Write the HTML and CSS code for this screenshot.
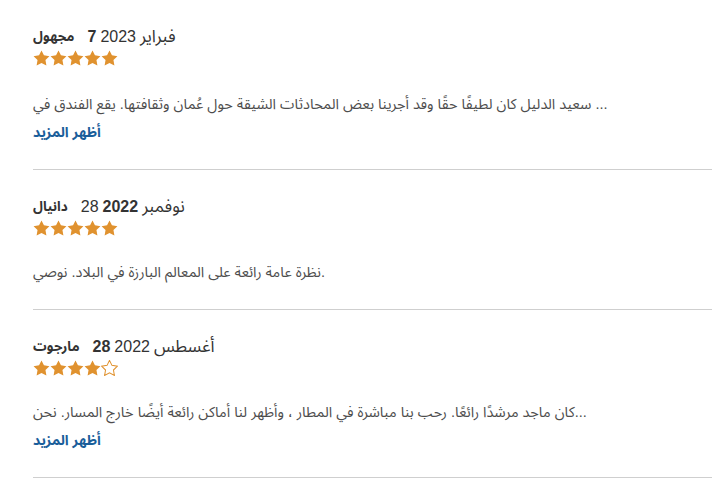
FILE: index.html
```html
<!DOCTYPE html>
<html lang="ar">
<head>
<meta charset="utf-8">
<link rel="stylesheet" href="styles.css">
</head>
<body>
<svg width="0" height="0" class="defs">
  <defs>
    <polygon id="star" points="12,2 15.09,8.26 22,9.27 17,14.14 18.18,21.02 12,17.77 5.82,21.02 7,14.14 2,9.27 8.91,8.26"/>
  </defs>
</svg>
<div class="reviews">
  <div class="review">
    <div class="head">
      <span class="name">مجهول</span>
      <span class="b">7</span>
      <span>2023</span>
      <span class="month">فبراير</span>
    </div>
    <div class="stars">
      <svg class="star" viewBox="1.5 1.5 21 20.2"><use href="#star"/></svg>
      <svg class="star" viewBox="1.5 1.5 21 20.2"><use href="#star"/></svg>
      <svg class="star" viewBox="1.5 1.5 21 20.2"><use href="#star"/></svg>
      <svg class="star" viewBox="1.5 1.5 21 20.2"><use href="#star"/></svg>
      <svg class="star" viewBox="1.5 1.5 21 20.2"><use href="#star"/></svg>
    </div>
    <p class="text">سعيد الدليل كان لطيفًا حقًا وقد أجرينا بعض المحادثات الشيقة حول عُمان وثقافتها. يقع الفندق في ...</p>
    <a class="more" href="#">أظهر المزيد</a>
  </div>
  <div class="review">
    <div class="head">
      <span class="name">دانيال</span>
      <span>28</span>
      <span class="b">2022</span>
      <span class="month">نوفمبر</span>
    </div>
    <div class="stars">
      <svg class="star" viewBox="1.5 1.5 21 20.2"><use href="#star"/></svg>
      <svg class="star" viewBox="1.5 1.5 21 20.2"><use href="#star"/></svg>
      <svg class="star" viewBox="1.5 1.5 21 20.2"><use href="#star"/></svg>
      <svg class="star" viewBox="1.5 1.5 21 20.2"><use href="#star"/></svg>
      <svg class="star" viewBox="1.5 1.5 21 20.2"><use href="#star"/></svg>
    </div>
    <p class="text">نظرة عامة رائعة على المعالم البارزة في البلاد. نوصي.</p>
  </div>
  <div class="review">
    <div class="head">
      <span class="name">مارجوت</span>
      <span class="b">28</span>
      <span>2022</span>
      <span class="month">أغسطس</span>
    </div>
    <div class="stars">
      <svg class="star" viewBox="1.5 1.5 21 20.2"><use href="#star"/></svg>
      <svg class="star" viewBox="1.5 1.5 21 20.2"><use href="#star"/></svg>
      <svg class="star" viewBox="1.5 1.5 21 20.2"><use href="#star"/></svg>
      <svg class="star" viewBox="1.5 1.5 21 20.2"><use href="#star"/></svg>
      <svg class="star empty" viewBox="1.5 1.5 21 20.2"><use href="#star"/></svg>
    </div>
    <p class="text">كان ماجد مرشدًا رائعًا. رحب بنا مباشرة في المطار ، وأظهر لنا أماكن رائعة أيضًا خارج المسار. نحن...</p>
    <a class="more" href="#">أظهر المزيد</a>
  </div>
</div>
</body>
</html>
```
FILE: styles.css
```css
html, body {
  margin: 0;
  padding: 0;
  background: #fff;
}
body {
  font-family: "Liberation Sans", "Noto Sans Arabic", "Noto Naskh Arabic", "DejaVu Sans", Arial, sans-serif;
  color: #333;
  overflow: hidden;
}
.defs {
  position: absolute;
  width: 0;
  height: 0;
}
.reviews {
  padding: 2px 0 0 33px;
}
.review {
  padding: 27px 0 27px 0;
  border-bottom: 1px solid #cfcfcf;
}
.review:first-child {
  padding-top: 25px;
}
.head {
  display: flex;
  align-items: center;
  gap: 4px;
  height: 20px;
  font-size: 16px;
  line-height: 20px;
  color: #333;
}
.head .name {
  font-weight: bold;
  font-size: 13.5px;
  margin-right: 9px;
}
.head .b {
  font-weight: bold;
}
.head .month {
  font-size: 17px;
}
.stars {
  display: flex;
  align-items: center;
  height: 22px;
}
.star {
  width: 17px;
  height: 16px;
  fill: #e0922f;
}
.star.empty {
  fill: #fff;
  stroke: #e0922f;
  stroke-width: 1.3;
}
.text {
  margin: 23px 0 0 0;
  font-size: 14.5px;
  line-height: 20px;
  color: #4d4d4d;
  white-space: nowrap;
}
.review:first-child .text {
  margin-top: 25px;
}
.more {
  display: block;
  margin-top: 8px;
  font-size: 14px;
  line-height: 20px;
  font-weight: bold;
  color: #1a5e9a;
  text-decoration: none;
}
```
